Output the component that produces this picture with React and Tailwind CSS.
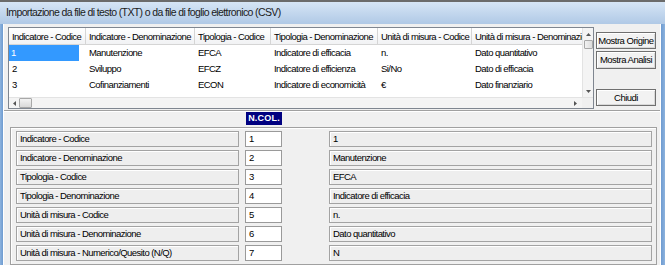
import React from "react";

const cols = [
  { w: 77, h: "Indicatore - Codice" },
  { w: 109, h: "Indicatore - Denominazione" },
  { w: 76, h: "Tipologia - Codice" },
  { w: 107, h: "Tipologia - Denominazione" },
  { w: 94, h: "Unità di misura - Codice" },
  { w: 111, h: "Unità di misura - Denominazione" },
];

const rows = [
  ["1", "Manutenzione", "EFCA", "Indicatore di efficacia", "n.", "Dato quantitativo"],
  ["2", "Sviluppo", "EFCZ", "Indicatore di efficienza", "Si/No", "Dato di efficacia"],
  ["3", "Cofinanziamenti", "ECON", "Indicatore di economicità", "€", "Dato finanziario"],
  ["4", "Candidature", "EFCA", "Indicatore di efficacia", "", "Dato quantitativo"],
];

const fields = [
  ["Indicatore - Codice", "1", "1"],
  ["Indicatore - Denominazione", "2", "Manutenzione"],
  ["Tipologia - Codice", "3", "EFCA"],
  ["Tipologia - Denominazione", "4", "Indicatore di efficacia"],
  ["Unità di misura - Codice", "5", "n."],
  ["Unità di misura - Denominazione", "6", "Dato quantitativo"],
  ["Unità di misura - Numerico/Quesito (N/Q)", "7", "N"],
];

function Btn({ children, h }) {
  return (
    <div
      className={`w-[60px] ${h} border border-[#6f6f6f] bg-[#f2f2f2] shadow-[inset_1px_1px_0_#ffffff,inset_-1px_-1px_0_#d8d8d8] flex items-center justify-center text-[9.5px] tracking-[-0.5px] text-black leading-none whitespace-nowrap`}
    >
      {children}
    </div>
  );
}

export default function App() {
  return (
    <div className="w-[665px] h-[265px] overflow-hidden bg-[#f0f0f0] font-['Liberation_Sans',Arial,sans-serif] text-black">
      {/* title bar */}
      <div className="h-[24px] border-t-2 border-[#6b6b6b] bg-gradient-to-b from-[#d6e5f5] to-[#b0c9e6] flex items-center pl-[6px] text-[10.5px] tracking-[-0.62px] text-[#1b1b1b] whitespace-nowrap">
        Importazione da file di testo (TXT) o da file di foglio elettronico (CSV)
      </div>
      <div className="flex h-[241px]">
        <div className="w-[4px] bg-gradient-to-r from-[#8db3de] to-[#6e9bd0] border-r border-[#ffffff]" />
        <div className="flex-1 flex flex-col pt-[3px]">
          {/* top section */}
          <div className="flex pl-[4px] h-[82px]">
            <div className="w-[586px] h-[82px] border border-[#7f8690] bg-white flex flex-col overflow-hidden">
              <div className="flex h-[69px]">
                <div className="w-[573px] overflow-hidden">
                  <div className="flex h-[17px] bg-gradient-to-b from-[#ffffff] to-[#f1f2f4] border-b border-[#d5d5d5]">
                    {cols.map((c, i) => (
                      <div
                        key={i}
                        style={{ width: c.w, minWidth: c.w }}
                        className="border-r border-[#d5d5d5] pl-[3px] text-[9.5px] tracking-[-0.55px] leading-[17px] whitespace-nowrap overflow-hidden"
                      >
                        {c.h}
                      </div>
                    ))}
                  </div>
                  {rows.map((r, ri) => (
                    <div key={ri} className="flex h-[16px]">
                      {r.map((v, ci) => (
                        <div
                          key={ci}
                          style={{ width: cols[ci].w, minWidth: cols[ci].w }}
                          className="text-[9.5px] tracking-[-0.55px] leading-[16px] whitespace-nowrap overflow-hidden"
                        >
                          {ri === 0 && ci === 0 ? (
                            <div className="w-[70px] bg-[#3399ff] text-white pl-[2px]">{v}</div>
                          ) : (
                            <div className="pl-[3px]">{v}</div>
                          )}
                        </div>
                      ))}
                    </div>
                  ))}
                </div>
                {/* vertical scrollbar */}
                <div className="w-[11px] bg-[#f4f4f4] border-l border-[#e3e3e3] flex flex-col items-center">
                  <div className="h-[12px] flex items-center justify-center">
                    <svg width="5" height="3" viewBox="0 0 5 3"><path d="M0 3 L2.5 0 L5 3Z" fill="#555" /></svg>
                  </div>
                  <div className="w-[9px] h-[9px] bg-gradient-to-r from-[#f2f2f2] to-[#dcdcdc] border border-[#a8a8a8] rounded-[1px]" />
                  <div className="flex-1" />
                  <div className="h-[12px] flex items-center justify-center">
                    <svg width="5" height="3" viewBox="0 0 5 3"><path d="M0 0 L2.5 3 L5 0Z" fill="#555" /></svg>
                  </div>
                </div>
              </div>
              {/* horizontal scrollbar */}
              <div className="flex h-[11px] bg-[#f4f4f4] border-t border-[#e3e3e3]">
                <div className="w-[573px] flex items-center">
                  <div className="w-[10px] flex items-center justify-center">
                    <svg width="3" height="5" viewBox="0 0 3 5"><path d="M3 0 L0 2.5 L3 5Z" fill="#555" /></svg>
                  </div>
                  <div className="w-[13px] h-[10px] bg-gradient-to-b from-[#f3f3f3] to-[#d9d9d9] border border-[#a8a8a8] rounded-[1px]" />
                  <div className="flex-1" />
                  <div className="w-[14px] flex items-center justify-center">
                    <svg width="3" height="5" viewBox="0 0 3 5"><path d="M0 0 L3 2.5 L0 5Z" fill="#555" /></svg>
                  </div>
                </div>
                <div className="w-[11px] bg-[#f0f0f0]" />
              </div>
            </div>
            <div className="ml-[2px] pt-[5px] flex flex-col">
              <Btn h="h-[17px]">Mostra Origine</Btn>
              <div className="h-[2px]" />
              <Btn h="h-[18px]">Mostra Analisi</Btn>
              <div className="h-[20px]" />
              <Btn h="h-[17px]">Chiudi</Btn>
            </div>
          </div>
          <div className="h-[1px] mt-[1px] bg-[#a0a0a0]" />
          <div className="h-[1px] bg-white" />
          {/* N.COL. */}
          <div className="pl-[242px] h-[15px] flex items-start">
            <div className="w-[36px] h-[13px] bg-[#000080] text-white font-bold text-[9px] leading-[13px] text-center tracking-[0.2px]">
              N.COL.
            </div>
          </div>
          {/* frame */}
          <div className="ml-[6px] w-[647px] flex-1 border border-[#a0a0a0] shadow-[inset_1px_1px_0_#ffffff] pt-[3px] pl-[5px] flex flex-col gap-[3px]">
            {fields.map((f, i) => (
              <div key={i} className="flex h-[16px] items-stretch">
                <div className="w-[223px] border border-[#a3a3a3] bg-[#eeeeee] shadow-[inset_1px_1px_0_#ffffff] pl-[3px] text-[9.5px] tracking-[-0.55px] leading-[14px] whitespace-nowrap">
                  {f[0]}
                </div>
                <div className="ml-[6px] w-[37px] border border-[#9a9a9a] bg-white pl-[3px] text-[9.5px] leading-[14px]">
                  {f[1]}
                </div>
                <div className="ml-[47px] w-[323px] border border-[#a3a3a3] bg-[#eeeeee] shadow-[inset_1px_1px_0_#ffffff] pl-[3px] text-[9.5px] tracking-[-0.55px] leading-[14px] whitespace-nowrap">
                  {f[2]}
                </div>
              </div>
            ))}
          </div>
        </div>
        <div className="w-[5px] bg-gradient-to-r from-[#6e9bd0] to-[#8db3de] border-l border-[#ffffff]" />
      </div>
    </div>
  );
}
